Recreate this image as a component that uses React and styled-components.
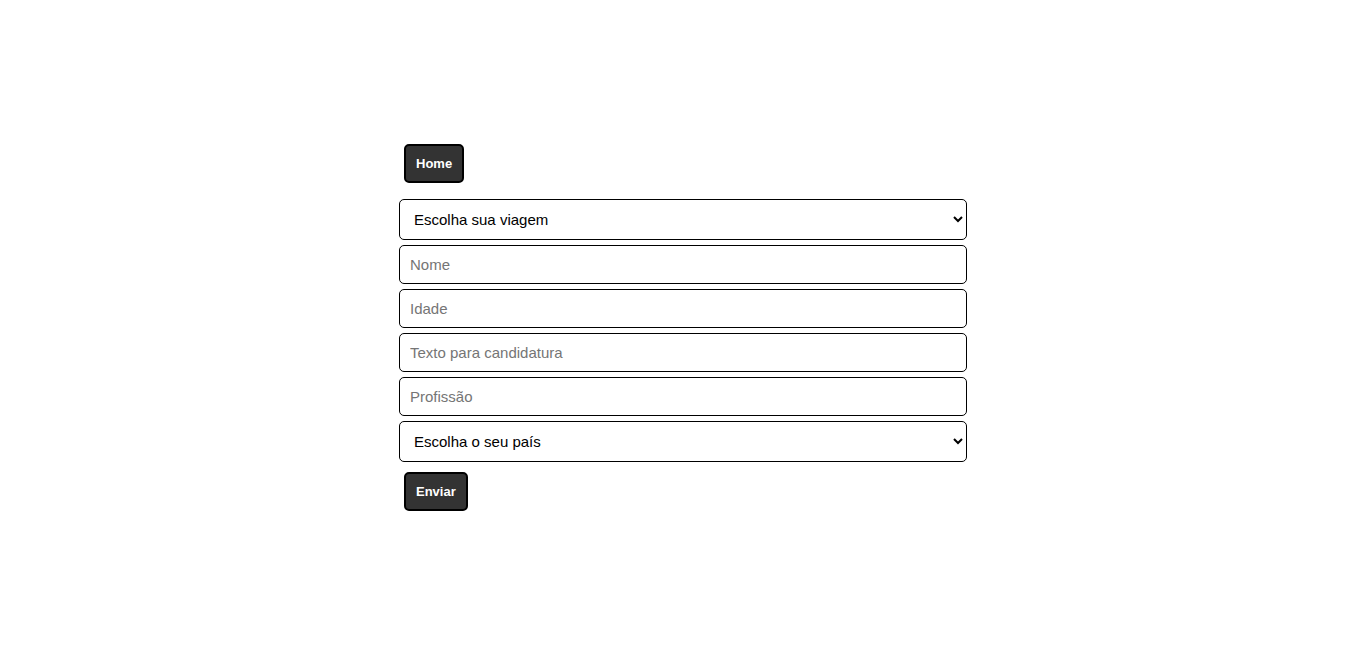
import React from 'react'
import styled, { createGlobalStyle } from 'styled-components'

const GlobalStyle = createGlobalStyle`
  body {
    margin: 0;
    font-family: "Liberation Sans", Arial, sans-serif;
    background: #fff;
  }
`

const Page = styled.main`
  height: 100vh;
  display: flex;
  align-items: center;
  justify-content: center;
`

const Wrapper = styled.section`
  width: 568px;
  display: flex;
  flex-direction: column;
`

const Button = styled.button`
  align-self: flex-start;
  margin: 5px;
  padding: 10px;
  background: #333;
  color: #fff;
  border: 2px solid #000;
  border-radius: 5px;
  font-family: "Liberation Sans", Arial, sans-serif;
  font-size: 13px;
  font-weight: bold;
  cursor: pointer;
`

const Form = styled.form`
  display: flex;
  flex-direction: column;
  gap: 5px;
  margin-top: 11px;
`

const Select = styled.select`
  height: 41px;
  padding: 0 10px;
  border: 1px solid #000;
  border-radius: 5px;
  background: #fff;
  color: #000;
  font-family: "Liberation Sans", Arial, sans-serif;
  font-size: 15px;
`

const Input = styled.input`
  height: 39px;
  box-sizing: border-box;
  padding: 0 10px;
  border: 1px solid #000;
  border-radius: 5px;
  font-family: "Liberation Sans", Arial, sans-serif;
  font-size: 15px;

  &::placeholder {
    color: #757575;
  }
`

export default function App() {
  return (
    <Page>
      <GlobalStyle />
      <Wrapper>
        <Button type="button">Home</Button>
        <Form onSubmit={(e) => e.preventDefault()}>
          <Select defaultValue="">
            <option value="">Escolha sua viagem</option>
          </Select>
          <Input placeholder="Nome" />
          <Input placeholder="Idade" type="number" />
          <Input placeholder="Texto para candidatura" />
          <Input placeholder="Profissão" />
          <Select defaultValue="">
            <option value="">Escolha o seu país</option>
          </Select>
          <Button type="submit">Enviar</Button>
        </Form>
      </Wrapper>
    </Page>
  )
}
